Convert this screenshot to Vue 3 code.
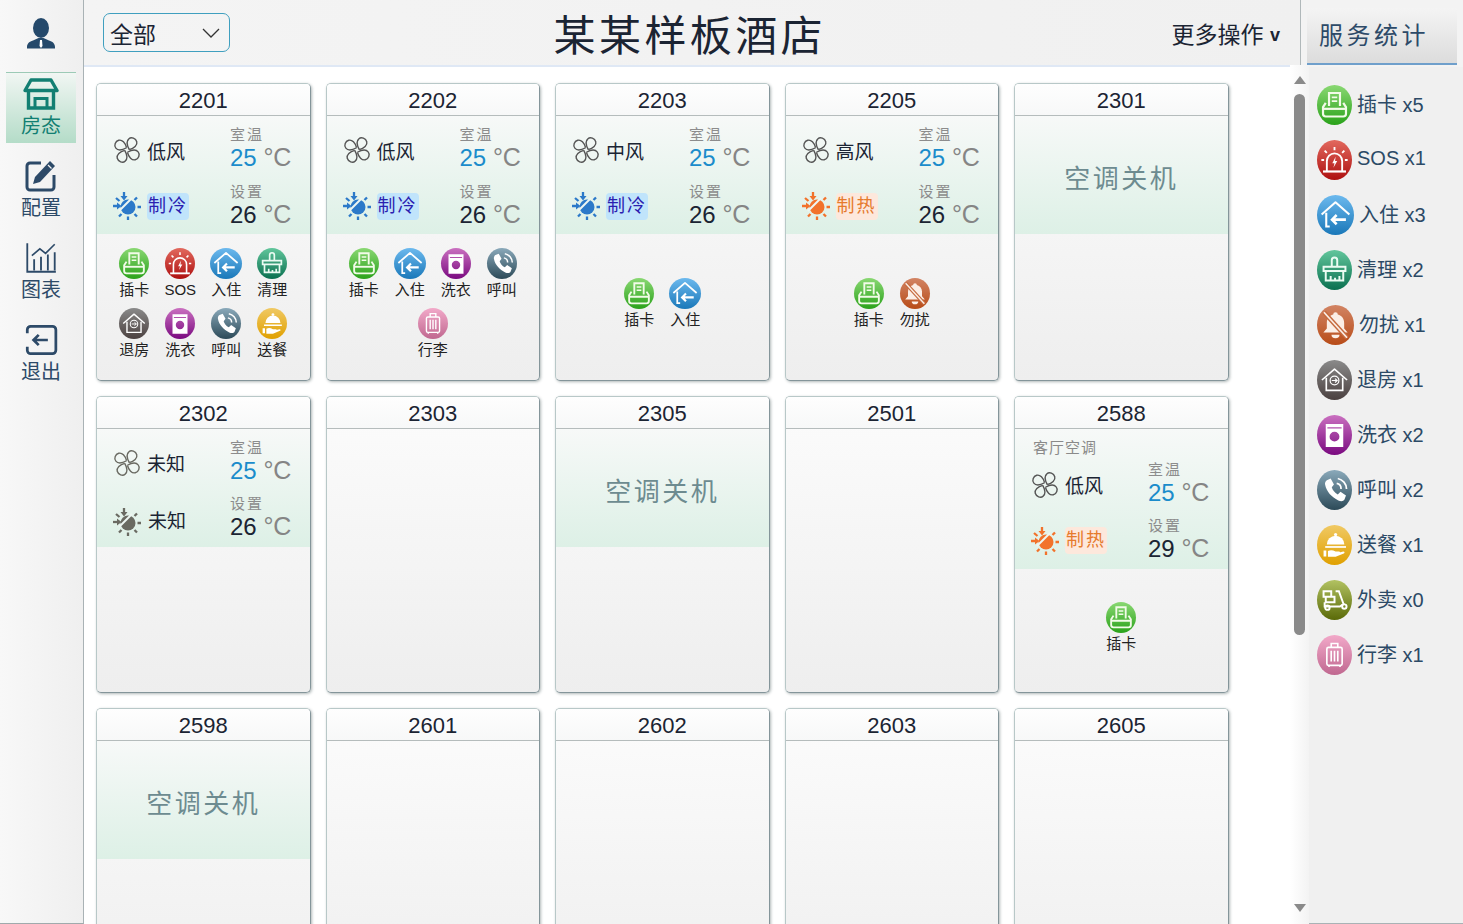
<script setup>
const tagNames = {
  card: '插卡', sos: 'SOS', checkin: '入住', clean: '清理', dnd: '勿扰', checkout: '退房',
  laundry: '洗衣', call: '呼叫', meal: '送餐', takeout: '外卖', luggage: '行李'
}

const stats = [
  ['card', 5], ['sos', 1], ['checkin', 3], ['clean', 2], ['dnd', 1], ['checkout', 1],
  ['laundry', 2], ['call', 2], ['meal', 1], ['takeout', 0], ['luggage', 1]
]

const nav = [
  { icon: 'n-store', text: '房态', active: true },
  { icon: 'n-edit', text: '配置' },
  { icon: 'n-chart', text: '图表' },
  { icon: 'n-exit', text: '退出' }
]

const ac = (fan, mode, set) => ({ fan, mode, set })

const rooms = [
  { no: 2201, ac: ac('低风', '制冷', 26), tags: ['card', 'sos', 'checkin', 'clean', 'checkout', 'laundry', 'call', 'meal'] },
  { no: 2202, ac: ac('低风', '制冷', 26), tags: ['card', 'checkin', 'laundry', 'call', 'luggage'] },
  { no: 2203, ac: ac('中风', '制冷', 26), tags: ['card', 'checkin'] },
  { no: 2205, ac: ac('高风', '制热', 26), tags: ['card', 'dnd'] },
  { no: 2301, off: true },
  { no: 2302, ac: ac('未知', '未知', 26) },
  { no: 2303 },
  { no: 2305, off: true },
  { no: 2501 },
  { no: 2588, label: '客厅空调', ac: ac('低风', '制热', 29), tags: ['card'] },
  { no: 2598, off: true },
  { no: 2601 },
  { no: 2602 },
  { no: 2603 },
  { no: 2605 }
]

const modeClass = { '制冷': 'cool', '制热': 'heat', '未知': 'unknown' }
</script>

<template>
  <svg class="defs" aria-hidden="true">
    <symbol id="fan" viewBox="1 1 26 26">
      <g fill="none" stroke="currentColor" stroke-width="1.300">
        <path d="M15.500 12.500C12.500 11 8.500 8 9.500 4.500 10.200 1.500 14.500 .5 17 2.500c2.500 2 1.500 6.500-1.500 10" transform="rotate(35 14 14)" />
        <path d="M15.500 12.500C12.500 11 8.500 8 9.500 4.500 10.200 1.500 14.500 .5 17 2.500c2.500 2 1.500 6.500-1.500 10" transform="rotate(125 14 14)" />
        <path d="M15.500 12.500C12.500 11 8.500 8 9.500 4.500 10.200 1.500 14.500 .5 17 2.500c2.500 2 1.500 6.500-1.500 10" transform="rotate(215 14 14)" />
        <path d="M15.500 12.500C12.500 11 8.500 8 9.500 4.500 10.200 1.500 14.500 .5 17 2.500c2.500 2 1.500 6.500-1.500 10" transform="rotate(305 14 14)" />
      </g>
    </symbol>
    <symbol id="sun" viewBox="0 0 28 28">
      <circle cx="15" cy="15" r="7.500" fill="currentColor" />
      <path d="M6 19 19 6" stroke="#eef6f2" stroke-width="2" />
      <g stroke="currentColor" stroke-width="2.300" fill="none">
        <path d="M15 24.500V28M8.500 22 6 24.500M21.500 22 24 24.500M24.500 15H28M21.500 8 24 5.500" />
        <path d="M0 14h5" />
        <path d="M11 0v5" />
        <path d="M3 6l3.500 3" />
      </g>
      <path d="M4 10.500 8.500 14 4 17.500zM7.500 4l3.500 4.500L14.500 4z" fill="currentColor" />
    </symbol>

    <symbol id="n-store" viewBox="0 0 36 32">
      <g fill="none" stroke="currentColor" stroke-width="3.400">
        <path d="M8 2h20l6 10.500H2z" stroke-linejoin="round" />
        <path d="M5.500 12.500v17.500h25V12.500" />
        <path d="M12 30V20.500h12V30" stroke-width="3" />
      </g>
    </symbol>
    <symbol id="n-edit" viewBox="0 0 32 32">
      <g fill="none" stroke="currentColor" stroke-width="3">
        <path d="M16 3H5a3 3 0 0 0-3 3v21a3 3 0 0 0 3 3h21a3 3 0 0 0 3-3V15" />
      </g>
      <path d="M25 1l5 5-15 16-7 2 2-7z" fill="currentColor" />
      <path d="M23 5l3.500 3.500" stroke="#f2f2f2" stroke-width="1.300" />
    </symbol>
    <symbol id="n-chart" viewBox="0 0 28 28">
      <g fill="none" stroke="currentColor" stroke-width="1.600">
        <path d="M2 1v25h25" />
        <path d="M8 25V15M14 25V13M20 25V11M26 25V9" />
        <path d="M6 12l7-6 5 4 8-8" stroke-width="1.400" />
      </g>
    </symbol>
    <symbol id="n-exit" viewBox="0 0 28 28">
      <g fill="none" stroke="currentColor" stroke-width="2.400">
        <path d="M2 8V5a3 3 0 0 1 3-3h19a3 3 0 0 1 3 3v18a3 3 0 0 1-3 3H5a3 3 0 0 1-3-3v-3" />
        <path d="M8 14h12M12 9.500 7.500 14l4.500 4.500" />
      </g>
    </symbol>

    <symbol id="card" viewBox="0 0 32 32">
      <g fill="none" stroke="#f2fbe8" stroke-width="2">
        <path d="M11 17V5h10v12" />
        <path d="M13.500 9h5M13.500 12.500h5" stroke-width="1.500" />
        <path d="M8 14 5.500 18v6a2.500 2.500 0 0 0 2.500 2.500h16a2.500 2.500 0 0 0 2.500-2.500v-6L24 14" />
        <path d="M6 19.500h20" />
      </g>
    </symbol>
    <symbol id="sos" viewBox="0 0 32 32">
      <g fill="none" stroke="#fff" stroke-width="1.700">
        <path d="M9 26V17a7 7 0 0 1 14 0v9" />
        <path d="M5.500 26.500h21" stroke-width="2" />
        <path d="M16 4v3M7 7.500l2 2M25 7.500l-2 2M4 16h2.500M25.500 16H28" />
      </g>
      <path d="M17 13l-3 6h2l-1 4 3.500-6h-2z" fill="#fff" />
    </symbol>
    <symbol id="checkin" viewBox="0 0 32 32">
      <g fill="none" stroke="#fff" stroke-width="1.800">
        <path d="M4 15.500 16 5l12 10.500" stroke-linejoin="round" />
        <path d="M8 14v12h3" />
        <path d="M13 20h12M17 16l-4 4 4 4" stroke-width="2.200" />
      </g>
    </symbol>
    <symbol id="clean" viewBox="0 0 32 32">
      <g fill="none" stroke="#eafbf2" stroke-width="1.800">
        <path d="M13.500 13V7a2.500 2.500 0 0 1 5 0v6" />
        <path d="M6 13h20v4H6z" />
        <path d="M8 17v8.500h16V17" />
        <path d="M12.500 25.500v-4M16.500 25.500v-2.500M20.500 25.500v-4" />
      </g>
    </symbol>
    <symbol id="dnd" viewBox="0 0 32 32">
      <path d="M16 5a2 2 0 0 1 2 2c3.500 1 5.500 3.500 5.500 7.500v4.500l3 3.500h-21l3-3.500v-4.500C8.500 10.500 10.500 8 14 7a2 2 0 0 1 2-2z" fill="#fbeee6" />
      <path d="M12.500 24.500a3.500 3 0 0 0 7 0z" fill="#fbeee6" />
      <path d="M6 5l20 22" stroke="#c66a3e" stroke-width="4" />
      <path d="M6 5l20 22" stroke="#fbeee6" stroke-width="1.500" />
    </symbol>
    <symbol id="checkout" viewBox="0 0 32 32">
      <g fill="none" stroke="#fff" stroke-width="1.500">
        <path d="M4.500 16 16 6l11.500 10" stroke-linejoin="round" />
        <path d="M8.500 14v11.500h15V14" />
        <circle cx="16" cy="16.500" r="4" stroke-width="1.100" />
        <path d="M13.500 16.500h5M16.500 14.700l2 1.800-2 1.800" stroke-width="1" />
      </g>
    </symbol>
    <symbol id="laundry" viewBox="0 0 32 32">
      <path fill-rule="evenodd" d="M8 6h16v21H8zM9.500 10h13V9h-13zM16 13a4.500 4.500 0 1 0 0 9 4.500 4.500 0 0 0 0-9z" fill="#fff" />
    </symbol>
    <symbol id="call" viewBox="0 0 32 32">
      <path d="M9 7l3.500-1.500 3 5.500-2 2.500c.8 2.800 2.700 5 5.500 6.500l2.500-2.500 5 3.500-1.500 4c-1 1.500-3.500 1.500-5.500.5-6-2.500-11-8.500-12-14C7 10 7.500 8 9 7z" fill="#fff" />
      <g fill="none" stroke="#fff" stroke-width="1.600">
        <path d="M18 10a5 5 0 0 1 4 5" />
        <path d="M19 5.500A10 10 0 0 1 27 15" />
      </g>
    </symbol>
    <symbol id="meal" viewBox="0 0 32 32">
      <g fill="#fff">
        <circle cx="17" cy="6.500" r="1.500" />
        <path d="M9 15.500a8 8 0 0 1 16 0z" />
        <path d="M7.500 17h19v1.600h-19z" />
        <path d="M6 21h2.500v5.500H6zM10 21.500c2.500-1.200 4.500-.8 7 .5h3c1.500 0 1.500 1.800 0 1.800h-3l7-1.800c1.500 0 1.500 1.300.5 1.800l-7.500 3h-7z" />
      </g>
    </symbol>
    <symbol id="takeout" viewBox="0 0 32 32">
      <g fill="none" stroke="#fff" stroke-width="1.800">
        <path d="M6 8h7v5H6zM8 13h8v5H8z" />
        <path d="M17 8h3l4 11" />
        <path d="M7 18v4h14l4-3" />
        <circle cx="9.500" cy="23" r="2" />
        <circle cx="25" cy="22" r="2" />
      </g>
    </symbol>
    <symbol id="luggage" viewBox="0 0 32 32">
      <g fill="none" stroke="#fff" stroke-width="1.500">
        <path d="M13 9V5.500h6V9" />
        <rect x="9" y="9" width="14" height="16.500" rx="1.500" />
        <path d="M13 12v10M16 12v10M19 12v10" />
        <path d="M11 25.500v1.500M21 25.500v1.500" />
      </g>
    </symbol>
  </svg>

  <div class="page">
    <aside class="nav">
      <svg class="avatar" viewBox="0 0 32 34">
        <ellipse cx="16" cy="11" rx="8" ry="10" fill="#25496b" />
        <path d="M2 31.500v-1.500c0-3.500 2.500-5.500 6-6.500l5.500-2.500h5l5.500 2.500c3.500 1 6 3 6 6.500v1.500z" fill="#25496b" />
        <path d="M15 23h2l.5 6-1.500 2-1.500-2z" fill="#fff" />
      </svg>
      <div v-for="item in nav" :key="item.text" class="nav-item" :class="{ active: item.active }">
        <svg class="nav-icon"><use :href="'#' + item.icon" /></svg>
        <span>{{ item.text }}</span>
      </div>
    </aside>

    <header class="top">
      <div class="select">
        <span>全部</span>
        <svg width="18" height="10" viewBox="0 0 18 10"><path d="M1 1l8 8 8-8" fill="none" stroke="#333" stroke-width="1.300" /></svg>
      </div>
      <h1>某某样板酒店</h1>
      <div class="more">更多操作 <b>v</b></div>
    </header>

    <div class="panel-top">
      <div class="panel-head">服务统计</div>
    </div>

    <main class="rooms">
      <section v-for="room in rooms" :key="room.no" class="room">
        <div class="room-no">{{ room.no }}</div>

        <div v-if="room.off" class="ac ac-off">空调关机</div>

        <div v-else-if="room.ac" class="ac">
          <div v-if="room.label" class="ac-label">{{ room.label }}</div>
          <div class="ac-grid" :class="{ unknown: room.ac.mode === '未知' }">
            <div class="ac-left">
              <div class="ac-line">
                <svg class="ac-icon fan"><use href="#fan" /></svg>
                <span>{{ room.ac.fan }}</span>
              </div>
              <div class="ac-line" :class="modeClass[room.ac.mode]">
                <svg class="ac-icon"><use href="#sun" /></svg>
                <span class="chip">{{ room.ac.mode }}</span>
              </div>
            </div>
            <div class="ac-right">
              <div class="stat">
                <small>室温</small>
                <p><em>25</em> <i>°C</i></p>
              </div>
              <div class="stat">
                <small>设置</small>
                <p>{{ room.ac.set }} <i>°C</i></p>
              </div>
            </div>
          </div>
        </div>

        <div v-if="room.tags" class="tags">
          <div v-for="tag in room.tags" :key="tag" class="tag">
            <span class="badge" :class="'b-' + tag"><svg><use :href="'#' + tag" /></svg></span>
            <span class="tag-text">{{ tagNames[tag] }}</span>
          </div>
        </div>
      </section>
    </main>

    <div class="scroll">
      <span class="arrow up"></span>
      <span class="thumb"></span>
      <span class="arrow down"></span>
    </div>

    <aside class="panel">
      <div v-for="[tag, count] in stats" :key="tag" class="stat-row">
        <span class="badge" :class="'b-' + tag"><svg><use :href="'#' + tag" /></svg></span>
        <span class="stat-text">{{ tagNames[tag] }} x{{ count }}</span>
      </div>
    </aside>
  </div>
</template>

<style>
html, body {
  margin: 0;
  overflow: hidden;
}
</style>

<style scoped>
.defs {
  position: absolute;
  width: 0;
  height: 0;
}
.page {
  display: grid;
  grid-template-columns: 84px 1206px 11px 8px 154px;
  grid-template-rows: 67px 857px;
  height: 924px;
  overflow: hidden;
  background: #fff;
  font-family: "Liberation Sans", "Noto Sans CJK SC", sans-serif;
  color: #1b2433;
}

.nav {
  grid-row: 1 / 3;
  display: flex;
  flex-direction: column;
  align-items: center;
  gap: 11px;
  padding-right: 1px;
  border-right: 1px solid #a9b2b5;
  border-bottom: 1px solid #a0aaac;
  box-sizing: border-box;
  background: linear-gradient(90deg, #f8f8f8, #efefef);
  color: #2d4a68;
}
.avatar {
  width: 32px;
  height: 34px;
  margin: 17px 0 10px;
}
.nav-item {
  width: 70px;
  height: 71px;
  box-sizing: border-box;
  border-top: 1px solid transparent;
  padding-top: 5px;
  display: flex;
  flex-direction: column;
  align-items: center;
  font-size: 20px;
  line-height: 24px;
}
.nav-item.active {
  border-top-color: #9ccab6;
  background: linear-gradient(#f1f6f3, #b4dcc8);
  color: #127f72;
}
.nav-icon {
  width: 36px;
  height: 32px;
  margin-bottom: 4px;
}

.top {
  grid-column: 2 / 4;
  display: flex;
  align-items: center;
  box-sizing: border-box;
  padding: 0 20px 0 19px;
  border-bottom: 2px solid #dfe8f5;
  border-right: 1px solid #b0b8ba;
  background: linear-gradient(90deg, #f4f4f4, #f0f0f0);
}
.select {
  width: 127px;
  height: 39px;
  box-sizing: border-box;
  display: flex;
  align-items: center;
  justify-content: space-between;
  padding: 0 9px 0 6px;
  border: 1px solid #3f9fbf;
  border-radius: 7px;
  font-size: 23px;
}
.top h1 {
  flex: 1;
  margin: 0;
  padding: 8px 22px 0 0;
  text-align: center;
  font-size: 42px;
  font-weight: 400;
  letter-spacing: 3.400px;
  line-height: 57px;
}
.more {
  font-size: 23px;
}
.more b {
  font-size: 18px;
  vertical-align: 2px;
}

.panel-top {
  grid-column: 4 / 6;
  padding: 8px 6px 2px;
  background: #f3f3f3;
}
.panel-head {
  padding-left: 12px;
  border-bottom: 2px solid #6f9fcb;
  background: linear-gradient(#f4f4f4, #dcdcdc);
  color: #2d4a68;
  font-size: 24px;
  letter-spacing: 3.500px;
  line-height: 55px;
}

.rooms {
  display: grid;
  grid-template-columns: repeat(5, 214.5px);
  grid-auto-rows: 297.5px;
  gap: 15px;
  padding: 16px 0 0 12px;
  overflow: hidden;
}
.room {
  display: flex;
  flex-direction: column;
  box-sizing: border-box;
  border: 1px solid #b8c8c8;
  border-right-color: #84959a;
  border-bottom-color: #84959a;
  border-radius: 5px;
  box-shadow: 1px 1px 3px rgba(60, 80, 80, 0.4);
  background: linear-gradient(#fcfcfc, #eeeeee);
  overflow: hidden;
}
.room-no {
  flex: none;
  height: 31px;
  border-bottom: 1px solid #b5bcbc;
  background: linear-gradient(#fefefe, #f7f8f8);
  font-size: 22px;
  line-height: 34px;
  text-align: center;
}

.ac {
  flex: none;
  min-height: 118px;
  background: linear-gradient(#f7f9f8, #ddf0e6);
}
.ac-off {
  height: 118px;
  line-height: 126px;
  text-align: center;
  font-size: 26px;
  letter-spacing: 2.500px;
  color: #6d8b90;
}
.ac-label {
  height: 22px;
  padding-left: 18px;
  line-height: 38px;
  font-size: 15px;
  letter-spacing: 1px;
  color: #8a8a8a;
}
.ac-grid {
  display: flex;
  height: 118px;
}
.ac-left {
  width: 133px;
  padding: 20px 0 0 16px;
  box-sizing: border-box;
  display: flex;
  flex-direction: column;
  gap: 28px;
}
.ac-line {
  display: flex;
  align-items: center;
  gap: 6px;
  height: 28px;
  font-size: 19px;
}
.ac-icon {
  width: 28px;
  height: 28px;
  flex: none;
}
.fan {
  color: #555;
}
.chip {
  padding: 0 1px;
  border-radius: 4px;
  font-size: 18px;
  letter-spacing: 2px;
  line-height: 27px;
}
.cool .ac-icon { color: #2c79c9; }
.cool .chip { background: #c0e4fb; color: #2a20b0; }
.heat .ac-icon { color: #f2722b; }
.heat .chip { background: #fde8dc; color: #e67a2c; }
.unknown .ac-icon { color: #6a6a62; }
.unknown .chip { font-size: 19px; letter-spacing: 0; }

.ac-grid.unknown .ac-left { gap: 31px; padding-top: 20px; }

.ac-right {
  padding-top: 11px;
  display: flex;
  flex-direction: column;
  gap: 12.500px;
}
.stat small {
  display: block;
  height: 16px;
  font-size: 15px;
  line-height: 16px;
  letter-spacing: 2px;
  color: #8c8c8c;
}
.stat p {
  margin: 0;
  height: 28px;
  font-size: 24px;
  line-height: 28px;
  white-space: nowrap;
}
.stat em {
  font-style: normal;
  color: #1b8ccb;
}
.stat i {
  font-style: normal;
  font-size: 25px;
  color: #858585;
}

.tags {
  flex: 1;
  display: flex;
  flex-wrap: wrap;
  justify-content: center;
  align-content: center;
  row-gap: 9px;
  padding: 0 14px 6px;
}
.tag {
  width: 46px;
  height: 51px;
  display: flex;
  flex-direction: column;
  align-items: center;
  font-size: 15px;
  line-height: 20px;
  color: #222;
}
.tag-text {
  margin-top: 1px;
}
.tag .badge {
  width: 30px;
  height: 31px;
}
.tag .b-checkin {
  width: 32px;
}

.badge {
  display: block;
  flex: none;
  border-radius: 50%;
}
.badge svg {
  display: block;
  width: 100%;
  height: 100%;
}
.b-card { background: linear-gradient(#8ad873, #2aa21a); }
.b-sos { background: linear-gradient(#e2695e, #ae1010); }
.b-checkin { background: linear-gradient(#6cb9ee, #1a78b9); }
.b-clean { background: linear-gradient(#62c69c, #0a7050); }
.b-dnd { background: linear-gradient(#d28464, #b84c18); }
.b-checkout { background: linear-gradient(#8a8a8a, #4b4140); }
.b-laundry { background: linear-gradient(#ca70c0, #7a0a80); }
.b-call { background: linear-gradient(#8aa9ba, #2c4a58); }
.b-meal { background: linear-gradient(#f0c964, #e0a000); }
.b-takeout { background: linear-gradient(#b2c262, #5a6a08); }
.b-luggage { background: linear-gradient(#f2a9c9, #c06890); }

.scroll {
  grid-column: 3 / 5;
  position: relative;
  margin-top: -2px;
  display: flex;
  flex-direction: column;
  align-items: center;
  background: linear-gradient(90deg, #ffffff, #f3f3f3);
}
.arrow {
  flex: none;
  width: 0;
  height: 0;
  border-left: 6.500px solid transparent;
  border-right: 6.500px solid transparent;
}
.arrow.up {
  margin-top: 11px;
  border-bottom: 8px solid #8a8a8a;
}
.thumb {
  flex: none;
  width: 11px;
  height: 541px;
  margin: 10px 0 269px;
  border-radius: 5.500px;
  background: #8a8a8a;
}
.arrow.down {
  border-top: 8px solid #8a8a8a;
}

.panel {
  display: flex;
  flex-direction: column;
  gap: 15px;
  box-sizing: border-box;
  padding: 18px 0 0 8px;
  border-bottom: 1px solid #a9b2b5;
  background: #f0f0f0;
}
.stat-row {
  display: flex;
  align-items: center;
  gap: 5px;
  height: 40px;
  font-size: 20px;
  color: #2c4a66;
}
.stat-text {
  padding-bottom: 4px;
}
.stat-row .badge {
  width: 35px;
  height: 40px;
}
.stat-row .b-checkin,
.stat-row .b-dnd {
  width: 37px;
}
</style>
